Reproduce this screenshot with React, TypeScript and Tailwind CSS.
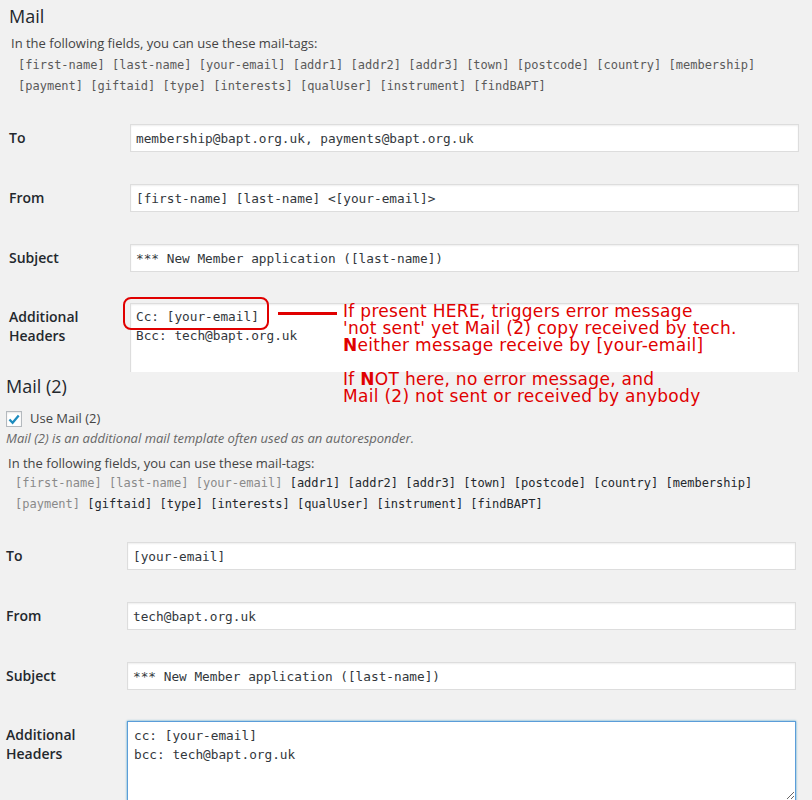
import React from 'react';

const mono = "font-['DejaVu_Sans_Mono',monospace]";

const TAGS_LINE_1 = ['first-name', 'last-name', 'your-email', 'addr1', 'addr2', 'addr3', 'town', 'postcode', 'country', 'membership'];
const TAGS_LINE_2 = ['payment', 'giftaid', 'type', 'interests', 'qualUser', 'instrument', 'findBAPT'];

// tags that are shown dimmed in the Mail (2) block
const USED = ['first-name', 'last-name', 'your-email', 'payment'];

const TagList: React.FC<{ dim?: boolean }> = ({ dim }) => {
  const color = (t: string) => {
    if (!dim) return 'text-[#5a5a5a]';
    return USED.includes(t) ? 'text-[#8a8a8a]' : 'text-[#23282d]';
  };
  return (
    <div className={`ml-[9px] text-[12px] leading-[21px] ${mono}`}>
      {[TAGS_LINE_1, TAGS_LINE_2].map((line, i) => (
        <div key={i} className="whitespace-pre">
          {line.map((t, j) => (
            <span key={t}>
              {j > 0 ? ' ' : ''}
              <span className={color(t)}>[{t}]</span>
            </span>
          ))}
        </div>
      ))}
    </div>
  );
};

const Label: React.FC<{ children: React.ReactNode }> = ({ children }) => (
  <div className="w-[121px] shrink-0 pt-[4px] text-[14px] leading-[19px] font-semibold text-[#23282d]">{children}</div>
);

const Field: React.FC<{ label: string; value: string; className?: string }> = ({ label, value, className }) => (
  <div className={`flex ${className ?? ''}`}>
    <Label>{label}</Label>
    <input
      readOnly
      value={value}
      className={`flex-1 h-[28px] border border-[#ddd] bg-white pl-[5px] text-[12.75px] text-[#32373c] shadow-[inset_0_1px_2px_rgba(0,0,0,0.07)] outline-none ${mono}`}
    />
  </div>
);

// bold capital used in the hand-written note, kept inside the 17px line box
const BoldN = () => <b className="inline-block leading-[17px] h-[17px]">N</b>;

const App: React.FC = () => {
  return (
    <div className="relative w-[812px] h-[800px] overflow-hidden bg-[#f1f1f1] font-['Open_Sans',sans-serif]">
      {/* Mail */}
      <section className="pl-[9px] pr-[13px]">
        <h2 className="pt-[4px] text-[18px] leading-[24px] text-[#23282d]">Mail</h2>
        <p className="mt-[5px] ml-[2px] text-[13px] leading-[20px] text-[#444]">In the following fields, you can use these mail-tags:</p>
        <div className="mt-[2px]">
          <TagList />
        </div>

        <Field className="mt-[27px]" label="To" value="membership@bapt.org.uk, payments@bapt.org.uk" />
        <Field className="mt-[32px]" label="From" value="[first-name] [last-name] <[your-email]>" />
        <Field className="mt-[32px]" label="Subject" value="*** New Member application ([last-name])" />

        <div className="flex mt-[31px]">
          <Label>
            Additional
            <br />
            Headers
          </Label>
          <div className="flex-1 h-[69px] overflow-hidden">
            <textarea
              readOnly
              value={'Cc: [your-email]\nBcc: tech@bapt.org.uk'}
              className={`block w-full h-[100px] resize-none border border-[#ddd] bg-white px-[5px] pt-[3px] text-[12.75px] leading-[19px] text-[#32373c] shadow-[inset_0_1px_2px_rgba(0,0,0,0.07)] outline-none ${mono}`}
            />
          </div>
        </div>
      </section>

      {/* Mail (2) */}
      <section className="pl-[6px] pr-[16px]">
        <h2 className="pt-[2px] text-[18px] leading-[24px] text-[#23282d]">Mail (2)</h2>
        <label className="mt-[13px] flex items-center gap-[8px] h-[16px]">
          <span className="flex items-center justify-center w-[16px] h-[16px] border border-[#b4b9be] bg-white shadow-[inset_0_1px_2px_rgba(0,0,0,0.1)]">
            <svg width="15" height="15" viewBox="0 0 16 16">
              <path d="M2.8 8 L6.4 11.8 L13.4 3.4" fill="none" stroke="#1e8cbe" strokeWidth="2.6" />
            </svg>
          </span>
          <span className="text-[13px] text-[#444]">Use Mail (2)</span>
        </label>
        <p className="mt-[1px] text-[13px] leading-[20px] italic text-[#666]">
          Mail (2) is an additional mail template often used as an autoresponder.
        </p>
        <p className="mt-[5px] ml-[2px] text-[13px] leading-[20px] text-[#444]">In the following fields, you can use these mail-tags:</p>
        <TagList dim />

        <Field className="mt-[27px]" label="To" value="[your-email]" />
        <Field className="mt-[32px]" label="From" value="tech@bapt.org.uk" />
        <Field className="mt-[32px]" label="Subject" value="*** New Member application ([last-name])" />

        <div className="flex mt-[31px]">
          <Label>
            Additional
            <br />
            Headers
          </Label>
          <textarea
            readOnly
            value={'cc: [your-email]\nbcc: tech@bapt.org.uk'}
            className={`flex-1 h-[80px] border border-[#5b9dd9] bg-white px-[6px] pt-[4px] text-[12.75px] leading-[19px] text-[#32373c] shadow-[0_0_2px_rgba(30,140,190,0.8)] outline-none ${mono}`}
          />
        </div>
      </section>

      {/* red annotation drawn over the screenshot */}
      <div className="absolute left-[123px] top-[297px] w-[146px] h-[33px] border-2 border-[#e00000] rounded-[8px]" />
      <div className="absolute left-[278px] top-[312px] w-[59px] h-[3px] bg-[#e00000]" />
      <div className="absolute left-[343px] top-[303px] text-[17px] leading-[17px] text-[#e00000] font-['DejaVu_Sans',sans-serif] tracking-[0.3px] whitespace-pre">
        <div className="h-[17px]">If present HERE, triggers error message</div>
        <div className="h-[17px]">'not sent' yet Mail (2) copy received by tech.</div>
        <div className="h-[17px]">
          <BoldN />either message receive by [your-email]
        </div>
        <div className="h-[17px]" />
        <div className="h-[17px]">
          If <BoldN />OT here, no error message, and
        </div>
        <div className="h-[17px]">Mail (2) not sent or received by anybody</div>
      </div>
    </div>
  );
};

export default App;
